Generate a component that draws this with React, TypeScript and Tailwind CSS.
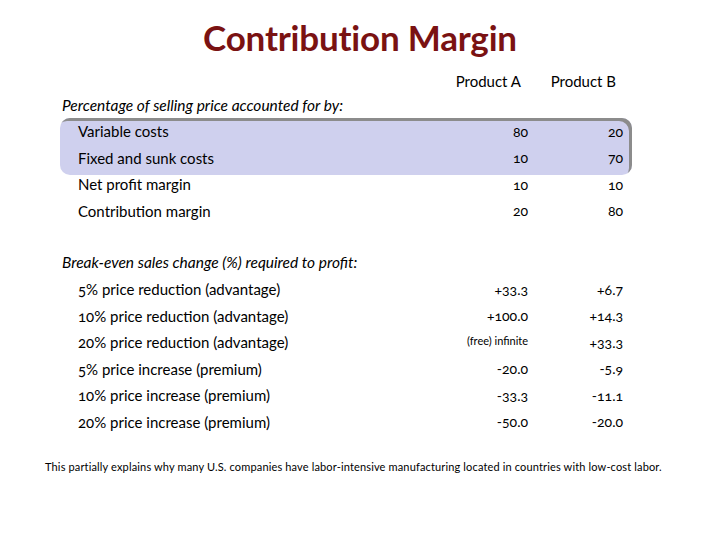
import * as React from "react"

type Row = { label: string; a: React.ReactNode; b: string }

const costRows: Row[] = [
  { label: "Variable costs", a: "80", b: "20" },
  { label: "Fixed and sunk costs", a: "10", b: "70" },
]

const marginRows: Row[] = [
  { label: "Net profit margin", a: "10", b: "10" },
  { label: "Contribution margin", a: "20", b: "80" },
]

const breakEvenRows: Row[] = [
  { label: "5% price reduction (advantage)", a: "+33.3", b: "+6.7" },
  { label: "10% price reduction (advantage)", a: "+100.0", b: "+14.3" },
  {
    label: "20% price reduction (advantage)",
    a: <span className="relative -top-[3px] text-[11px]">(free) infinite</span>,
    b: "+33.3",
  },
  { label: "5% price increase (premium)", a: "-20.0", b: "-5.9" },
  { label: "10% price increase (premium)", a: "-33.3", b: "-11.1" },
  { label: "20% price increase (premium)", a: "-50.0", b: "-20.0" },
]

function DataRow({ row }: { row: Row }) {
  return (
    <div className="grid h-[26.5px] grid-cols-[1fr_90px_95px] items-center">
      <span className="text-[15px]">{row.label}</span>
      <span className="text-right">{row.a}</span>
      <span className="text-right">{row.b}</span>
    </div>
  )
}

export default function App() {
  return (
    <div className="relative h-[540px] w-[720px] overflow-hidden bg-white font-['Lato','Open_Sans',sans-serif] text-[14px] text-black [font-variant-numeric:oldstyle-nums]">
      <h1 className="pt-[16px] text-center text-[35px] font-bold leading-[42px] tracking-[-0.2px] text-[#7a1212]">
        Contribution Margin
      </h1>

      <div className="mt-[12px] grid h-[20px] grid-cols-[1fr_90px_95px] items-center pr-[104px] pl-[78px] text-[15px]">
        <span />
        <span className="text-right">Product A</span>
        <span className="text-right">Product B</span>
      </div>

      <p className="mt-[5px] h-[20px] pl-[62px] text-[15.5px] italic leading-[20px]">
        Percentage of selling price accounted for by:
      </p>

      <div className="mb-[-4px] ml-[60px] mt-[3px] w-[572px] rounded-[10px] bg-[#cfd0ee] pb-[4px] pl-[18px] pr-[9px] shadow-[inset_-3px_3px_0_#8c8c8c]">
        {costRows.map((r) => (
          <DataRow key={r.label} row={r} />
        ))}
      </div>

      <div className="pl-[78px] pr-[97px]">
        {marginRows.map((r) => (
          <DataRow key={r.label} row={r} />
        ))}
      </div>

      <p className="mt-[26px] h-[24px] pl-[62px] text-[15.5px] italic leading-[24px]">
        Break-even sales change (%) required to profit:
      </p>

      <div className="mt-[2px] pl-[78px] pr-[97px]">
        {breakEvenRows.map((r) => (
          <DataRow key={r.label} row={r} />
        ))}
      </div>

      <p className="mt-[24px] pl-[45px] text-[11px] leading-[16px] tracking-[0.15px]">
        This partially explains why many U.S. companies have labor-intensive manufacturing located in countries with low-cost labor.
      </p>
    </div>
  )
}
